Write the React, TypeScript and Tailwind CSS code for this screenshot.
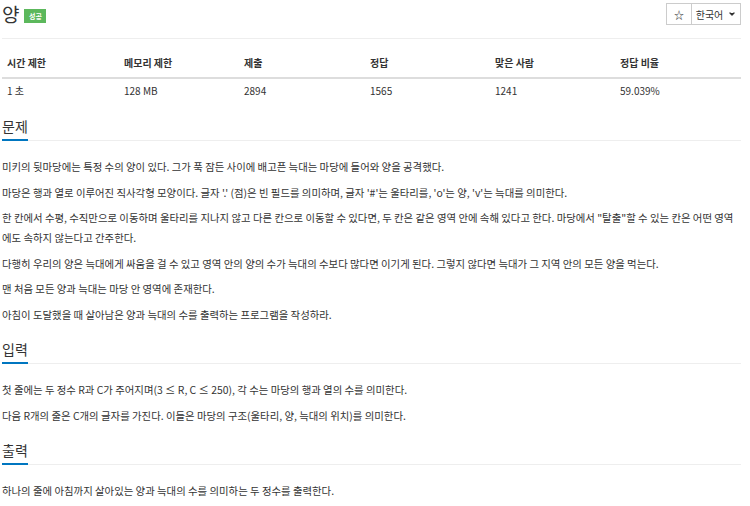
import { ChevronDown } from "lucide-react";

const stats = [
  { label: "시간 제한", value: "1 초" },
  { label: "메모리 제한", value: "128 MB" },
  { label: "제출", value: "2894" },
  { label: "정답", value: "1565" },
  { label: "맞은 사람", value: "1241" },
  { label: "정답 비율", value: "59.039%" },
];

const problem = [
  "미키의 뒷마당에는 특정 수의 양이 있다. 그가 푹 잠든 사이에 배고픈 늑대는 마당에 들어와 양을 공격했다.",
  "마당은 행과 열로 이루어진 직사각형 모양이다. 글자 '.' (점)은 빈 필드를 의미하며, 글자 '#'는 울타리를, 'o'는 양, 'v'는 늑대를 의미한다.",
  "한 칸에서 수평, 수직만으로 이동하며 울타리를 지나지 않고 다른 칸으로 이동할 수 있다면, 두 칸은 같은 영역 안에 속해 있다고 한다. 마당에서 \"탈출\"할 수 있는 칸은 어떤 영역에도 속하지 않는다고 간주한다.",
  "다행히 우리의 양은 늑대에게 싸움을 걸 수 있고 영역 안의 양의 수가 늑대의 수보다 많다면 이기게 된다. 그렇지 않다면 늑대가 그 지역 안의 모든 양을 먹는다.",
  "맨 처음 모든 양과 늑대는 마당 안 영역에 존재한다.",
  "아침이 도달했을 때 살아남은 양과 늑대의 수를 출력하는 프로그램을 작성하라.",
];

const input = [
  "첫 줄에는 두 정수 R과 C가 주어지며(3 ≤ R, C ≤ 250), 각 수는 마당의 행과 열의 수를 의미한다.",
  "다음 R개의 줄은 C개의 글자를 가진다. 이들은 마당의 구조(울타리, 양, 늑대의 위치)를 의미한다.",
];

const output = ["하나의 줄에 아침까지 살아있는 양과 늑대의 수를 의미하는 두 정수를 출력한다."];

function Section({ title, paras, first }: { title: string; paras: string[]; first?: boolean }) {
  return (
    <section className={first ? "mt-[15px]" : "mt-[12.5px]"}>
      <div className="flex border-b border-[#eee]">
        <h2 className="-mb-px border-b-2 border-[#0076c0] text-[14px] leading-[25px] text-[#333]">{title}</h2>
      </div>
      <div className="pt-[16px]">
        {paras.map((p) => (
          <p key={p} className="mb-[5.5px] text-[10.4px] leading-[20px] text-[#333]">{p}</p>
        ))}
      </div>
    </section>
  );
}

export default function App() {
  return (
    <main className="min-h-[506px] w-[750px] bg-white pl-[2px] pr-[9px] font-['Noto_Sans_CJK_KR',sans-serif] text-[#333]">
      <div className="flex h-[39px] items-start justify-between border-b border-[#eee]">
        <div className="flex items-center gap-[5px] pt-[3px]">
          <h1 className="text-[19px] leading-[22px]">양</h1>
          <span className="mt-[4px] flex h-[14px] w-[22px] items-center justify-center bg-[#5cb85c] text-[7px] font-bold text-white">성공</span>
        </div>
        <div className="mt-[3px] flex h-[22px] border border-[#ccc] text-[10px]">
          <button className="flex w-[25px] items-center justify-center border-r border-[#ccc] text-[10px]">☆</button>
          <button className="flex w-[48px] items-center justify-center gap-[5px]">
            한국어
            <ChevronDown size={8} strokeWidth={4} className="fill-[#333]" />
          </button>
        </div>
      </div>
      <div className="mt-[13px] grid grid-cols-[117px_120px_126px_125px_125px_1fr] text-[10px]">
        {stats.map((s) => (
          <div key={s.label} className="border-b-2 border-[#ddd] px-[5px] pb-[6px] pt-[3px] font-bold leading-[16px]">{s.label}</div>
        ))}
        {stats.map((s) => (
          <div key={s.value} className="px-[5px] pt-[4px] leading-[16px]">{s.value}</div>
        ))}
      </div>
      <Section first title="문제" paras={problem} />
      <Section title="입력" paras={input} />
      <Section title="출력" paras={output} />
    </main>
  );
}
